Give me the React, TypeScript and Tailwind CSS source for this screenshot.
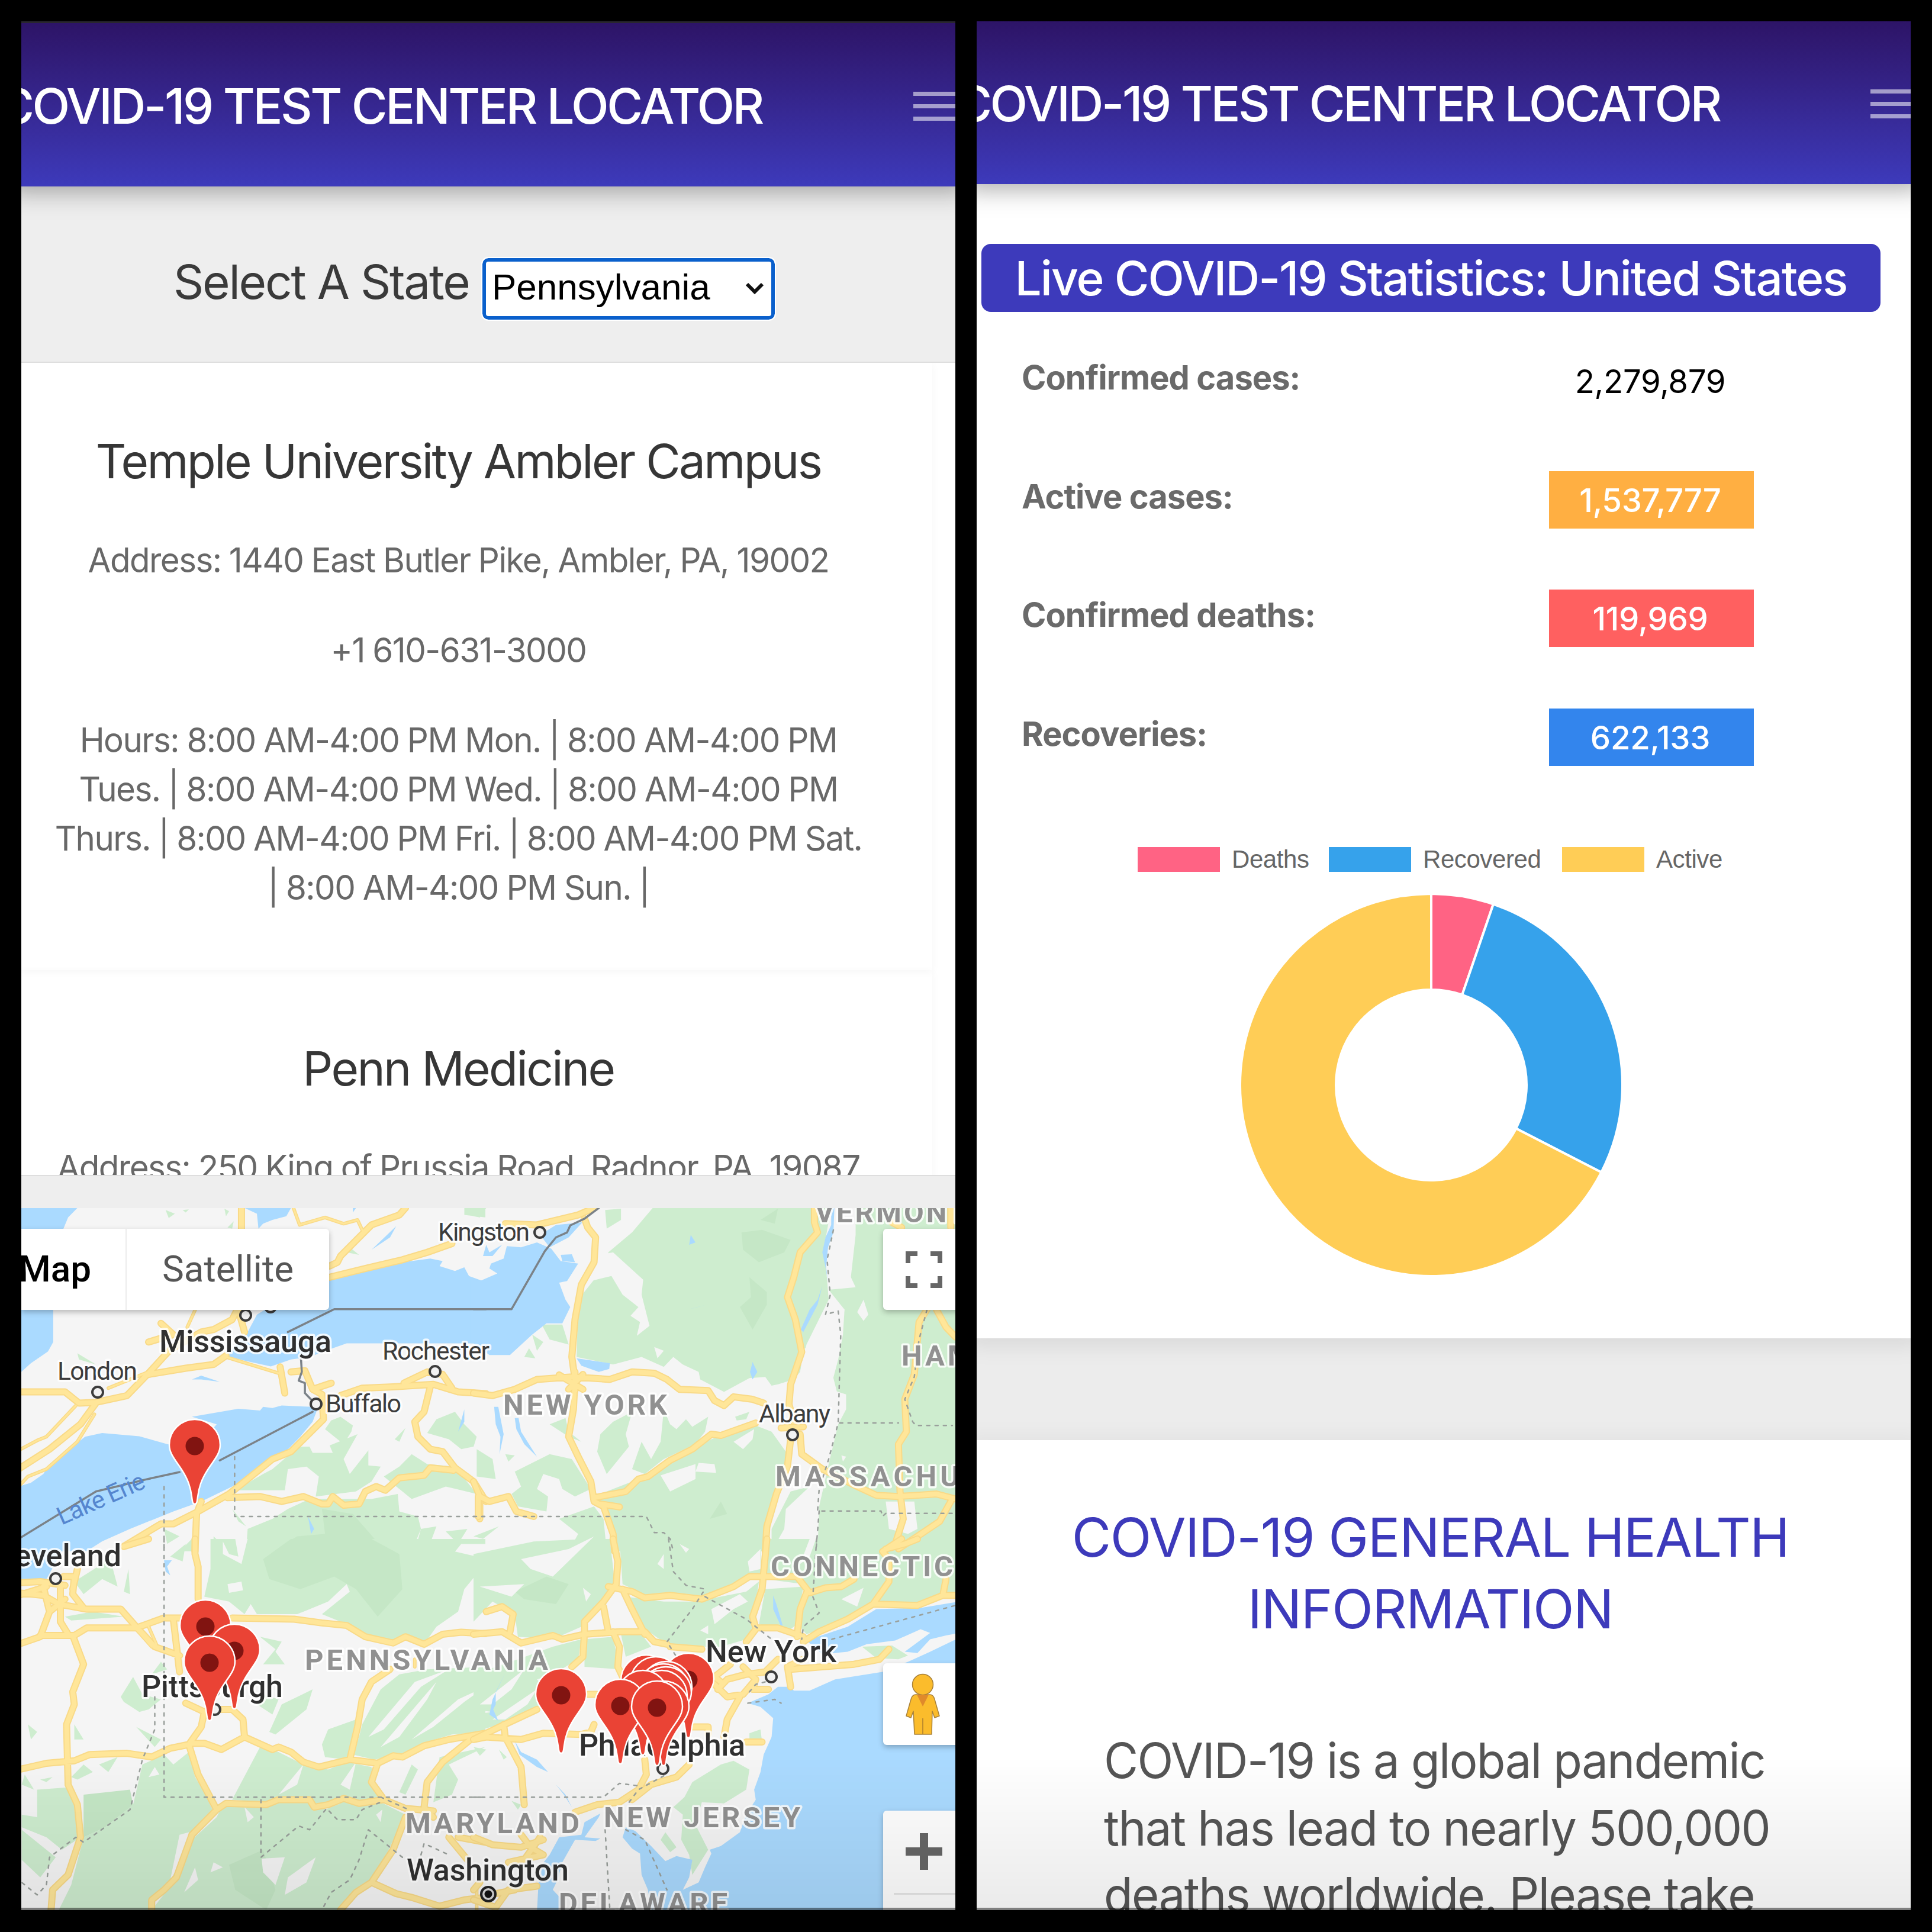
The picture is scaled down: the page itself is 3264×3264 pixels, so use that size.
import type { ReactNode } from "react";

const INTER = "font-['Inter','Liberation_Sans',sans-serif]";

/* ---------- Map artwork ---------- */

type Tile = {
  transform: string;
  green: string;
  clear: string;
  dark: string;
  water: string;
  border: string;
  dotted: string;
  road: string;
  thin: string;
};

const tiles: Tile[] = [
  {
    transform: "translate(0 1960) scale(.52296 .42092)",
    green:
      "M1380 1095L1410 1040L1470 1010L1500 1060L1540 1110L1530 1150L1490 1160L1450 1120ZM1050 1080L1070 1045L1100 1030L1140 1065L1135 1090L1110 1140ZM965 1150L1000 1150L1010 1175H1075L1065 1145L1155 1100L1110 1200L1130 1260L1190 1165L1190 1225L1230 1230L1200 1290L1150 1330L1020 1350L1030 1270L990 1230L930 1240L920 1325L760 1325L850 1260L880 1240ZM795 1570L800 1480L880 1440L930 1400L1000 1360H1200L1285 1340L1290 1410L1350 1430L1360 1480L1330 1570ZM1240 1270L1290 1230L1330 1180L1380 1220L1470 1230L1540 1340L1440 1310L1330 1360L1290 1320ZM750 1400L795 1470L770 1450ZM530 1480L580 1510L540 1540ZM690 1510L740 1570H690ZM620 1520L580 1570H630ZM535 200L565 215L545 232ZM590 200L610 198L600 210ZM725 195L740 205L730 225ZM735 270L755 245L750 275ZM1500 192H1568V230L1500 220ZM1125 345L1160 380L1120 370ZM250 775L310 820L255 800ZM1275 1120L1310 1075L1290 1130ZM1440 1490L1510 1480L1480 1540ZM1360 1480L1410 1470L1380 1570H1340Z",
    clear: "",
    dark: "M1040 1400L1140 1420L1210 1520L1230 1570H880L960 1510L1050 1500Z",
    water:
      "M60 192H250L220 230L205 275L172 600V730L155 768L100 815L60 860ZM790 192H940L925 225L880 240L850 255L835 275L830 215ZM1065 480L1180 445L1300 410L1390 395L1430 405L1420 425L1470 445L1500 430L1515 465L1560 485H1600V735H1120L1075 755L1000 790L940 800L875 828L790 805L730 785L800 690L830 620L870 590L1000 550ZM60 1310L100 1295L140 1260L160 1220L275 1110L330 1095L450 1108L540 1140L630 1160L700 1060L620 1030L770 998L840 1005L850 990L880 995L910 985L1010 990L1025 1000L1010 1050L970 1110L900 1200L800 1280L650 1370L560 1410L420 1480L330 1530L280 1570H60ZM620 880L650 865L710 890L650 880ZM1200 360L1280 265L1260 310ZM1480 1090L1500 1000L1500 1050ZM995 1430L1015 1480L1005 1500ZM1140 192H1150L1140 210Z",
    border: "M60 1520L310 1330L470 1282L580 1252M710 1205L1010 1010M1020 980L985 935L985 895L965 885L975 850L972 790M930 690L1080 598H1570",
    dotted: "M758 1190V1430H1568M530 1310V1568",
    road:
      "M780 192V275M1310 192L1290 220L1200 260L1100 385L1090 410L1065 425M1065 470L1180 435L1300 400L1380 370L1460 335M60 930H210L255 975L310 972L410 945L480 855L550 760L650 690L690 680L750 640L770 590M770 600L790 690M480 730L560 700L520 655M480 860L600 835L690 820L730 785M905 830L920 935M940 850L985 845L1010 920L1040 940L1045 1040L940 1170L880 1200L800 1280L740 1340L640 1410L560 1460L520 1460L480 1490L400 1550M1010 920L1070 895M1100 945L1170 915L1270 910L1400 900L1480 930L1570 937M1305 895L1380 850L1430 860L1460 915M1390 910L1370 1010L1340 1050L1350 1110L1390 1160L1430 1170L1470 1235L1530 1290L1570 1370M735 1355L840 1350L910 1370L980 1350L1040 1380H1060L1075 1350L1110 1385L1160 1380L1180 1330L1215 1310L1245 1325L1290 1275L1370 1265L1390 1235L1465 1245M650 1370L635 1420L630 1570M310 975L260 1060L160 1160L60 1240M1550 1370V1440",
    thin:
      "M948 192L968 260L1050 230L1110 255L1155 240L1170 280M730 790L900 855M245 985L150 1110L120 1125L60 1165M305 1020L250 1130L150 1240L90 1270L60 1310M350 915L410 885L480 850M630 602L605 670",
  },
  {
    transform: "translate(800 1960) scale(.53571 .42092)",
    green:
      "M425 370L500 290L565 192H1128L1105 350L1115 480L1120 560L1050 740L1030 850L1010 880L960 900L940 905L920 870L870 875L790 930L715 880L710 850L660 820L630 790L600 830L530 790L440 820L325 790L330 560L380 480L430 465ZM1205 192H1530V1570H1085L1090 1390L1120 1220L1150 1060L1175 1000V940L1125 920L1150 800L1165 700L1170 600L1120 520L1205 510L1190 470L1205 300ZM380 1350L500 1290L620 1200L750 1120L880 1060L940 1090L985 1170L1000 1230L960 1330L920 1570H450L430 1420ZM1000 1330L1060 1310L985 1400L980 1480L940 1570V1480ZM390 1170L400 1100L440 1050L500 1010L480 1100L490 1150L420 1260ZM600 1000L620 1060L640 1080L670 1040L690 1070L740 1030L730 1090L700 1140L600 1200L540 1260L500 1240L530 1130L560 1200L590 1130ZM240 1060L290 1035L300 1090L340 1130L300 1110ZM130 1250L240 1180L310 1200L350 1280L370 1320L320 1350L280 1320L270 1280L220 1260L200 1320L235 1350L230 1410L140 1390L120 1340L150 1310ZM10 1160L60 1200L70 1280L10 1270ZM100 1180L130 1185L110 1210ZM270 1440L380 1390L410 1440L420 1570H300L330 1500ZM0 1510L80 1470L30 1520ZM215 660H280L300 740L240 720ZM185 700L220 730L200 765ZM160 790L175 755L195 795ZM415 200L465 195V240L420 275ZM0 192H40L20 230L0 225ZM825 1030L870 1010L860 1040L830 1045Z",
    clear:
      "M400 380L440 370L535 480L530 540L555 665L515 705L525 650L495 625L520 590L470 540L435 465L370 485ZM570 750L600 765L580 795ZM590 1265L700 1220V1280L620 1330ZM710 1215L760 1220L765 1255L700 1250ZM820 1130L885 1080L880 1120L850 1160ZM1140 560L1170 600L1160 640L1110 670L1120 590ZM1210 610L1230 560L1245 620L1230 645ZM1040 760L1120 690L1110 790L1130 850L1150 950V1000L1120 1060L1060 1110L1010 1040ZM1160 1185L1175 1190L1165 1210ZM1300 1370H1390L1400 1480L1370 1500L1310 1480ZM1030 1530L1070 1420L1080 1570ZM1190 1540L1215 1520L1200 1545Z",
    dark: "M845 290L910 280L1000 320L980 370L900 410L850 360ZM870 470L925 530V580L880 680L840 590L875 550ZM905 240L960 195L950 255ZM780 1370L800 1420L745 1440Z",
    water:
      "M-10 735V480L20 485L75 455L50 435L55 415L95 395L105 345L150 350L200 330L245 355L275 405L330 415L295 485L270 492L290 560L305 590L280 655H230L185 700L115 782H50L0 735ZM210 300L260 260L340 250L400 192L350 240L300 310L240 350ZM275 380L310 378L320 410L280 405ZM30 385L40 340L50 370L90 340L60 385ZM325 795L430 815L428 838L395 850L340 825ZM685 300L700 330L680 340ZM880 810L895 850L880 880L872 850ZM675 600L735 580L700 592ZM1128 192H1138L1135 290L1118 350L1112 430L1118 490L1110 430L1100 370L1110 310L1128 260ZM1100 505L1085 580L1040 690L1032 680L1060 600L1085 560ZM65 990H78L95 1100L82 1180L85 1110L70 1060ZM130 1035H142L150 1090L200 1190L160 1140L135 1080Z",
    border: "M0 598H120L225 365L260 310L295 290L305 262L350 235L395 192",
    dotted:
      "M0 1430H545L570 1495H600L620 1520L630 1570M1135 280L1115 400L1125 540L1110 620L1150 605L1158 700L1150 1055L1120 1200L1090 1320L1085 1408H1285L1290 1430L1300 1418H1520M1090 1408L1080 1568M1155 1055H1340M1430 600L1405 720L1390 870L1360 960L1385 1050L1395 1065H1510",
    road:
      "M0 935L60 945L130 920L200 880L310 870L430 880L500 850L570 855L610 880L650 920L740 925L760 965L790 985L820 950L880 960L915 975M350 235L360 270L385 310L380 410L340 500L320 640L310 790L320 880L315 1000L300 1110L330 1190L370 1290L380 1370L410 1390L440 1500L445 1570M270 862L345 920M345 860L300 920M320 850V925M100 255L200 260L330 220L380 192M380 1355L480 1330L520 1280L550 1270L620 1205L690 1160L750 1100L780 1105L890 1055M1075 192V250L1085 290L1030 370L1010 470L990 550L1015 640L1035 770L1000 900L995 980L1010 1050M1000 1120L990 1230L955 1340L925 1470L920 1570M1030 1100L1035 1180L1100 1240L1210 1310L1270 1345L1340 1350L1400 1345L1460 1340L1520 1360M1430 600L1405 650L1390 860L1360 960L1365 1090L1340 1140L1345 1330L1355 1440L1330 1540M1460 600L1490 670L1520 710M1505 1370L1470 1450L1400 1510L1340 1560M0 1290L20 1350L50 1370L110 1350L135 1410L190 1430M15 1350V1430M400 1380L460 1392M970 1075L1040 1070M1320 250L1350 270M1505 192V270",
    thin: "",
  },
  {
    transform: "translate(0 2600) scale(.52296 .42347)",
    green:
      "M680 0H1568V20L1490 20L1470 50L1540 70L1568 110L1540 140L1500 200L1480 290L1410 350L1370 420L1310 390L1250 410L1140 370L1120 340L1040 300L1130 210L1120 180L1060 250L960 300L830 300L810 260L790 300L740 250L660 230L680 120ZM1170 740L1230 600L1290 540L1380 520L1568 510V770L1460 780L1380 810L1290 860L1210 880L1140 860L1160 790ZM1060 760L1150 720L1120 880L1050 870L1040 820ZM870 770L910 660L1010 600L990 680L890 780ZM840 830L900 850L980 900L1060 920L1120 890L1200 910L1220 1000L1230 1040L1050 1060L850 1050L750 1040ZM530 860L560 900L610 850L630 950L660 1010L690 1090L620 1180L590 1300L530 1400L480 1480H190L230 1380L270 1190L340 1150L430 1060L460 900ZM120 1000L230 990L260 1190L200 1240L150 1190L70 1150V1100L120 1110ZM70 1160L180 1270L130 1350L70 1280ZM720 1060L850 1060L870 1040L1000 1050L1050 1080L1110 1050L1230 1050L1310 1100L1240 1280L1200 1370L1100 1480H490L560 1370L620 1200L700 1110ZM240 170L330 100L350 50L380 190L330 160L270 220ZM400 210L415 120L420 220ZM390 630L430 550L460 620L520 640L480 680L450 690L400 650ZM520 490L540 520L490 540ZM550 70L600 20L590 90ZM840 390L910 410L890 450L920 500L850 500L890 440ZM850 620L900 640L880 700L830 660ZM210 310L300 290L400 310L230 325ZM440 750L520 800L500 830ZM240 740L270 800L240 800ZM230 950L270 900L300 930L250 960ZM320 900L380 870L350 930ZM80 940L110 1000L70 980ZM1420 870L1568 830L1450 900L1480 960L1460 1020L1400 1050ZM90 740L120 770L100 800ZM1330 900L1350 920L1310 1020L1290 1010ZM130 960L170 950L150 970Z",
    clear:
      "M720 10L740 60L770 70L760 0H800L780 100L720 60ZM735 180L780 170L785 205L740 215ZM845 1275L920 1270L890 1380L850 1330ZM930 1350L1020 1270L990 1370L920 1420ZM790 1070L820 1110L800 1130ZM580 1180L610 1170L600 1260L550 1360ZM690 1290L720 1310L680 1330ZM940 960L980 900L960 980L900 1020ZM480 950L500 910L515 940ZM630 1310L640 1360L595 1410ZM1215 1100L1235 1080L1230 1130ZM1190 790L1340 570L1450 520L1360 590L1240 760ZM1230 830L1410 570L1380 640L1290 790ZM1330 800L1480 640L1568 590L1500 650L1400 750ZM1100 980L1150 890L1130 1000Z",
    dark: "M850 80L940 0H1200L1290 60L1300 200L1220 310L1150 200L1080 150L970 200L870 160ZM270 1020L420 1000L430 1060L340 1150L270 1190ZM740 1300L850 1240L890 1400L860 1480L760 1400Z",
    water: "M60 0H315L270 30L200 50L150 160H60ZM530 85L555 85L540 110L550 145L535 130Z",
    border: "",
    dotted:
      "M530 0V1030H1568M500 630L500 760L460 880L420 1080L270 1210L245 1190L160 1270L150 1380L120 1420L70 1370M843 1040V1270L965 1145L1000 1160L1055 1075L1090 1120H1150L1170 1080L1230 1050M1230 1030L1320 1080M1300 1270L1190 1160L1160 1280L1130 1360L1070 1410L1040 1480M1360 1260L1370 1215L1450 1260",
    road:
      "M480 0L400 30M630 0V60L640 110V240M60 175L130 170L210 185M60 215L140 225L190 260L280 280H390L440 350L500 430L580 465M140 190L160 290L130 390L60 420M195 190L195 330L220 380M205 150L240 150L235 220L270 275M250 120L235 200M60 225L150 190M160 290L210 240M130 385H240L280 355H440L530 315H600M560 320L580 530M235 385L270 500L235 610L240 660L215 740L220 980L250 1060L260 1190L220 1340L170 1400L165 1480M60 920L150 895L240 885L290 860L410 855L490 870L550 835L610 820L650 750L660 690L600 655M610 820L640 940L700 1080L620 1180L570 1350L530 1400L490 1440V1480M620 815H660L715 840L790 790L785 720L750 680H690M790 790L880 840L900 830L940 850L980 890L1030 910L1130 880L1220 895L1200 970L1235 1030M1130 880L1155 750L1170 640L1200 570L1260 520M1220 895L1270 865L1300 870L1370 825L1450 800L1568 775M1520 800L1430 890L1380 970L1370 1070L1400 1110M700 1080L730 1055L860 1060L900 1040H1000L1015 1070L1060 1060L1110 1035L1160 1055L1240 1040L1310 1075L1400 1085M1310 1110L1270 1240L1200 1370L1150 1410L1100 1480M1200 1370L1280 1415L1330 1430L1420 1465L1500 1440L1568 1430M1450 1190L1510 1280M1480 1190L1568 1210M750 315L950 320L1040 335L1120 345L1180 390L1270 415L1310 390L1370 420L1430 380L1490 372L1568 378",
    thin: "M440 360L490 430M480 350L505 420M1340 480V510M1540 1390V1480",
  },
  {
    transform: "translate(800 2600) scale(.53571 .42347)",
    green:
      "M0 60L190 10L360 0H430L445 170L400 250L340 350L250 400L140 390L130 300L60 250L0 330ZM460 0H905L910 140L870 140L800 190L730 230L560 235L470 180ZM480 230L600 250L700 250L860 210L900 170L880 350L860 400L780 430L620 430L520 340ZM350 400L440 390L460 520L350 510ZM935 0H1520V230L1370 260H1260L1180 320L1050 380L1030 350L1050 220L1040 180L920 160ZM920 200L1040 190L1020 340L990 370L900 340ZM0 540L140 480L250 430L340 400L330 480L250 540L200 560L230 600L200 680L110 730L0 770V700L60 690L0 680ZM690 970L780 900L820 885L870 920L860 1000L790 1055L720 1050L700 1140L740 1240L690 1340L680 1260L655 1200L660 1100L630 1070L665 1030ZM590 1200L605 1170L640 1230L620 1250ZM870 775L905 760L910 810L870 815ZM1225 430L1320 425L1370 465L1340 480L1270 475ZM120 1045L140 1080L150 1060ZM0 830L40 840L20 865ZM80 840L105 870L95 880ZM465 380L530 380L560 430L480 470Z",
    clear:
      "M150 80L300 40L380 -10L250 150L180 120ZM20 190L160 180L120 230ZM345 195L370 220L355 250ZM580 100L600 60V120ZM650 20L680 40L670 55ZM840 220L865 250L820 280L760 340L750 280ZM865 90L905 40V120L870 130ZM715 365L740 345V380ZM20 660L160 520L120 600L60 660ZM60 720L200 600L170 660L100 720ZM1030 100L1060 0H1080L1060 70ZM1160 240L1230 195L1210 270Z",
    dark: "M130 210L230 150L300 180L260 260L160 240Z",
    water:
      "M1530 250L1410 275L1270 280L1180 350L1050 405L1100 460L1180 450L1240 420L1330 405L1410 360L1440 375L1360 450L1400 455L1440 400L1490 385L1530 375ZM1530 395L1440 450L1370 490L1290 530L1140 560L1060 605L1010 605L1000 590L960 590L930 620L865 655L905 670L945 715L940 790L915 860L905 930L885 1000L890 1040L860 1100L840 1170L780 1225L745 1240L750 1255L730 1310L710 1370L660 1400L680 1350L690 1280L640 1265L605 1285L560 1225L510 1165L480 1150L470 1190L500 1235L525 1255L530 1340L550 1400L560 1490H1530ZM400 1095L350 1130L340 1180L270 1190L240 1260L215 1300L205 1370L200 1490H265L280 1440L250 1400L265 1360L280 1290L320 1200L385 1205L400 1195L350 1190L395 1110ZM945 225L955 260L975 345L970 350L945 280ZM100 535L70 610V660L62 680L78 725L50 700L60 640ZM130 805L150 850L200 880L235 930L200 910L145 860ZM260 980L290 1020L310 1070L285 1020Z",
    border: "",
    dotted:
      "M615 0L630 130L670 185L730 200L690 280L610 410L640 470M730 230L860 320L940 400M1082 0L1070 230L1090 295L1040 350L1035 400M1130 400L1520 265M0 1030H410L460 975L520 985M415 1160L430 1480M480 1160L540 1200L610 1400M600 945L520 1000L485 1060M865 655L950 640L970 655M870 610L890 580L950 560",
    road:
      "M0 380L90 370L150 415L250 385L280 400L350 380L460 370H540L570 410L610 420M40 290L90 270L125 300L115 370M440 0L455 90L450 180L410 250L350 330V370L345 470L310 510M425 190L500 210L540 235L620 225L720 240L820 190L870 150L1020 150L1060 215L1110 195L1160 190L1200 160M470 200L500 280L540 380M410 270L425 370M440 370L460 430L455 510L470 550M925 0L910 200L880 310L890 355L960 355L1040 390M1050 215L1030 280L1020 390M890 360L860 410M1520 225H1480L1450 240L1400 265L1260 260L1180 320L1090 370L1040 410M1350 0L1290 50L1310 80V170L1260 260M1400 0L1360 20L1300 40M1490 160L1480 225M1310 440L1280 480L1200 500L1000 520M770 600L800 560L860 540L920 530L960 480M1000 590L990 510L1040 480M850 510L890 560L880 600H930M620 430L720 440M780 570L760 550L810 500M760 580L800 630L850 620L890 560M840 630L800 720L790 790M690 750H740V780M200 680L90 745L0 800M0 800L40 790L150 800L220 775L340 780L370 770L380 740M95 740L100 790L150 910L160 1060M860 810H910M360 620H390M540 880L545 940L520 1000L460 1050L390 1060L320 1090M680 900L640 950L560 980L500 1040M0 1190L60 1220L150 1230L220 1200M150 1180L180 1230L220 1260L110 1290M210 1190L160 1280M0 1440L70 1470L110 1400L200 1385M50 1420L130 1400M20 1370L0 1400",
    thin: "",
  },
];

type Label = { t: string; x: number; y: number; w?: number; kind: "town" | "city" | "state"; end?: boolean };

const labels: Label[] = [
  { t: "Kingston", x: 740, y: 2096, w: 155, kind: "town" },
  { t: "London", x: 97, y: 2331, w: 135, kind: "town" },
  { t: "Rochester", x: 646, y: 2297, w: 181, kind: "town" },
  { t: "Buffalo", x: 550, y: 2386, w: 128, kind: "town" },
  { t: "Albany", x: 1282, y: 2403, w: 121, kind: "town" },
  { t: "Mississauga", x: 269, y: 2284, w: 291, kind: "city" },
  { t: "Cleveland", x: 205, y: 2646, kind: "city", end: true },
  { t: "Pittsburgh", x: 239, y: 2867, w: 239, kind: "city" },
  { t: "Philadelphia", x: 978, y: 2966, w: 281, kind: "city" },
  { t: "New York", x: 1192, y: 2808, w: 221, kind: "city" },
  { t: "Washington", x: 687, y: 3177, w: 274, kind: "city" },
  { t: "VERMONT", x: 1377, y: 2065, w: 256, kind: "state" },
  { t: "HAMPSHIRE", x: 1523, y: 2307, w: 320, kind: "state" },
  { t: "NEW YORK", x: 850, y: 2390, w: 277, kind: "state" },
  { t: "MASSACHUSETTS", x: 1310, y: 2511, w: 490, kind: "state" },
  { t: "CONNECTICUT", x: 1302, y: 2663, w: 380, kind: "state" },
  { t: "PENNSYLVANIA", x: 515, y: 2821, w: 411, kind: "state" },
  { t: "MARYLAND", x: 685, y: 3097, w: 294, kind: "state" },
  { t: "NEW JERSEY", x: 1020, y: 3087, w: 332, kind: "state" },
  { t: "DELAWARE", x: 944, y: 3232, w: 285, kind: "state" },
];

const labelClass = {
  town: "fill-[#3c3c3c] stroke-white text-[43px] font-normal",
  city: "fill-[#303030] stroke-white text-[52px] font-medium",
  state: "fill-[#919191] stroke-white text-[49px] font-bold",
};

const townDots = [
  [415, 2222], [457, 2208], [165, 2352], [735, 2317], [534, 2372], [912, 2082],
  [1339, 2424], [1303, 2833], [94, 2667], [363, 2888], [1120, 2988],
];

const pins = [
  [329, 2541], [347, 2846], [396, 2887], [354, 2907], [1163, 2936],
  [1092, 2939], [1108, 2942], [1126, 2950], [1121, 2954], [1125, 2959], [1118, 2965], [1086, 2965],
  [948, 2962], [1048, 2980], [1121, 2983], [1110, 2983],
];

const PIN =
  "M0 0C-4 0 -4 -5 -5 -12C-7 -28 -11 -41 -22 -58C-33 -75 -43 -85 -43 -100A43 43 0 1 1 43 -100C43 -85 33 -75 22 -58C11 -41 7 -28 5 -12C4 -5 4 0 0 0Z";

function MapArt() {
  const px = { vectorEffect: "non-scaling-stroke" } as const;
  return (
    <svg viewBox="36 2041 1578 1187" className="block h-[1187px] w-[1578px] font-['Roboto',sans-serif]" strokeLinejoin="round">
      <rect x="36" y="2041" width="1578" height="1187" fill="#f5f5f5" />
      {tiles.map((t) => (
        <g key={t.transform} transform={t.transform}>
          <path d={t.green} fill="#ceedcf" />
          <path d={t.dark} fill="#c5e7c6" />
          <path d={t.clear} fill="#f5f5f5" />
          <path d={t.water} fill="#aadaff" />
        </g>
      ))}
      {tiles.map((t) => (
        <g key={t.transform} transform={t.transform} fill="none" strokeLinecap="round">
          <path d={t.road} stroke="#f9da88" strokeWidth="12" {...px} />
          <path d={t.thin} stroke="#f9da88" strokeWidth="6" {...px} />
          <path d={t.road} stroke="#ffe699" strokeWidth="8" {...px} />
          <path d={t.thin} stroke="#ffe699" strokeWidth="3" {...px} />
          <path d={t.border} stroke="#7b8288" strokeWidth="3.5" {...px} />
          <path d={t.dotted} stroke="#9aa09c" strokeWidth="2.5" strokeDasharray="5 9" {...px} />
        </g>
      ))}
      <text transform="translate(104 2577) rotate(-24)" className="fill-[#5586cf] text-[42px]" textLength="158">
        Lake Erie
      </text>
      {townDots.map(([x, y]) => (
        <circle key={x} cx={x} cy={y} r="9" fill="#f2f2f2" stroke="#3c3c3c" strokeWidth="4" />
      ))}
      <circle cx="825" cy="3200" r="12" fill="#d8d8d8" stroke="#222" strokeWidth="4" />
      <circle cx="825" cy="3200" r="6.5" fill="#111" />
      {labels.map((l) => (
        <text
          key={l.t + l.y}
          x={l.x}
          y={l.y}
          textLength={l.w}
          textAnchor={l.end ? "end" : "start"}
          paintOrder="stroke"
          strokeWidth="7"
          strokeOpacity="0.85"
          className={labelClass[l.kind]}
        >
          {l.t}
        </text>
      ))}
      {pins.map(([x, y]) => (
        <g key={`${x}-${y}`} transform={`translate(${x} ${y})`}>
          <path d={PIN} fill="#ea4335" stroke="#fff" strokeWidth="2.5" />
          <circle cy="-98" r="15.5" fill="#811411" />
        </g>
      ))}
    </svg>
  );
}

function MapView() {
  return (
    <div className="relative h-[1187px] w-full overflow-hidden">
      <MapArt />
      <div className="absolute left-0 top-[35px] flex h-[137px] rounded-r-md bg-white font-['Roboto',sans-serif] text-[62px] leading-[136px] shadow-[0_4px_10px_rgba(0,0,0,0.25)]">
        <div className="flex w-[178px] justify-end border-r-2 border-[#ececec] pr-[58px] font-medium text-black">Map</div>
        <div className="w-[342px] pl-[60px] text-[#565656]">Satellite</div>
      </div>
      <div className="absolute left-[1456px] top-[35px] h-[137px] w-[130px] rounded-md bg-white pl-[38px] pt-[38px] shadow-[0_4px_10px_rgba(0,0,0,0.25)]">
        <svg viewBox="0 0 62 62" className="size-[62px]" fill="none" stroke="#666" strokeWidth="8">
          <path d="M20 4H4V20M42 4H58V20M4 42V58H20M58 42V58H42" />
        </svg>
      </div>
      <div className="absolute left-[1456px] top-[769px] h-[138px] w-[130px] rounded-md bg-white pl-[38px] pt-[17px] shadow-[0_4px_10px_rgba(0,0,0,0.25)]">
        <svg viewBox="0 0 58 106" className="h-[106px] w-[58px]" fill="#fbbc2c" stroke="#a8813a" strokeWidth="1.5" strokeLinejoin="round">
          <path d="M17 36H41C46 36 48 40 49 44L57 72L49 75L45 64L44 103H15L13 64L9 75L1 72L9 44C10 40 12 36 17 36Z" />
          <circle cx="29" cy="19" r="17.5" />
          <path d="M19 36L29 56L39 36Z" fill="#e08a2b" stroke="none" />
          <path d="M29 76V102" stroke="#c08d2c" strokeWidth="2" />
        </svg>
      </div>
      <div className="absolute left-[1456px] top-[1018px] h-[180px] w-[130px] rounded-md bg-white pl-[38px] pt-[38px] shadow-[0_4px_10px_rgba(0,0,0,0.25)]">
        <svg viewBox="0 0 62 62" className="size-[62px]" stroke="#666" strokeWidth="14">
          <path d="M31 0V62M0 31H62" />
        </svg>
        <div className="-ml-5 mt-[39px] h-[3px] w-[130px] bg-[#e6e6e6]" />
      </div>
    </div>
  );
}

/* ---------- Shared chrome ---------- */

function Header({ className, menu }: { className: string; menu: string }) {
  return (
    <header
      className={`relative z-10 flex shrink-0 items-center justify-end bg-linear-to-b from-[#2d1467] to-[#3d3abb] shadow-[0_-14px_40px_22px_rgba(0,0,0,0.34)] ${className}`}
    >
      <h1 className="whitespace-nowrap text-[83px] font-medium leading-none tracking-[-0.041em] text-white">
        COVID-19 TEST CENTER LOCATOR
      </h1>
      <div className={`flex shrink-0 flex-col gap-[14px] ${menu}`}>
        <span className="h-[7px] bg-white/55" />
        <span className="h-[7px] bg-white/55" />
        <span className="h-[7px] bg-white/55" />
      </div>
    </header>
  );
}

function Screen({ children, bg }: { children: ReactNode; bg: string }) {
  return (
    <section className={`relative flex h-[3191px] w-[1578px] flex-col overflow-hidden ${bg}`}>
      {children}
      <div className="pointer-events-none absolute inset-x-0 bottom-0 z-20 h-[260px] border-b-4 border-black/50 bg-linear-to-b from-transparent to-black/8" />
    </section>
  );
}

/* ---------- Left screen ---------- */

function Center({ name, lines }: { name: string; lines: string[][] }) {
  return (
    <article className="w-[1539px] px-[20px] pb-[98px] pt-[118px] text-center shadow-[0_3px_14px_rgba(0,0,0,0.04)]">
      <div className="-ml-[69px] w-[1575px]">
        <h2 className="text-[80px] leading-[96px] tracking-[-0.033em] text-[#363636]">{name}</h2>
        <div className="mt-[78px] flex scale-x-[0.975] flex-col gap-[69px] text-[58px] leading-[83px] tracking-[-0.028em] [word-spacing:-0.015em] text-[#686868]">
          {lines.map((block) => (
            <div key={block[0]}>
              {block.map((row) => (
                <p key={row} className="whitespace-nowrap">{row}</p>
              ))}
            </div>
          ))}
        </div>
      </div>
    </article>
  );
}

function LocatorScreen() {
  return (
    <Screen bg="bg-[#eeeeee]">
      <Header className="h-[279px] border-t-3 border-[#29272f] pt-[4px]" menu="ml-[255px] w-[71px]" />
      <div className="flex h-[296px] shrink-0 items-start pl-[257px] pt-[113px]">
        <label className="w-[522px] whitespace-nowrap text-[80px] leading-[96px] tracking-[-0.028em] text-[#3a3a3a]">
          Select A State
        </label>
        <div className="mt-[8px] flex h-[104px] w-[494px] items-center justify-between rounded-[10px] border-[6px] border-[#0a60cc] bg-white pl-[10px] pr-[11px] font-['Liberation_Sans',Arial,sans-serif] text-[62px] leading-[80px] text-black outline-2 outline-white">
          <span className="-mt-[6px]">Pennsylvania</span>
          <svg viewBox="0 0 34 24" className="h-6 w-[34px]" fill="none" stroke="#111" strokeWidth="6">
            <path d="M4 4L17 17L30 4" />
          </svg>
        </div>
      </div>
      <div className="h-[1376px] shrink-0 overflow-hidden border-y-2 border-[#dedede] bg-white">
        <Center
          name="Temple University Ambler Campus"
          lines={[
            ["Address: 1440 East Butler Pike, Ambler, PA, 19002"],
            ["+1 610-631-3000"],
            [
              "Hours: 8:00 AM-4:00 PM Mon. | 8:00 AM-4:00 PM",
              "Tues. | 8:00 AM-4:00 PM Wed. | 8:00 AM-4:00 PM",
              "Thurs. | 8:00 AM-4:00 PM Fri. | 8:00 AM-4:00 PM Sat.",
              "| 8:00 AM-4:00 PM Sun. |",
            ],
          ]}
        />
        <Center name="Penn Medicine" lines={[["Address: 250 King of Prussia Road, Radnor, PA, 19087"]]} />
      </div>
      <div className="h-[54px] shrink-0" />
      <MapView />
    </Screen>
  );
}

/* ---------- Right screen ---------- */

const stats = [
  { label: "Confirmed cases:", value: "2,279,879", tone: "text-black" },
  { label: "Active cases:", value: "1,537,777", tone: "bg-[#ffaf42] font-medium text-white" },
  { label: "Confirmed deaths:", value: "119,969", tone: "bg-[#ff6060] font-medium text-white" },
  { label: "Recoveries:", value: "622,133", tone: "bg-[#3385ed] font-medium text-white" },
];

const slices = [
  { name: "Deaths", value: 119969, fill: "#ff6384", box: "bg-[#ff6384]", cell: "w-[323px]" },
  { name: "Recovered", value: 622133, fill: "#36a2eb", box: "bg-[#36a2eb]", cell: "w-[394px]" },
  { name: "Active", value: 1537777, fill: "#ffcd56", box: "bg-[#ffcd56]", cell: "w-[280px]" },
];

function Doughnut() {
  const total = slices.reduce((sum, s) => sum + s.value, 0);
  const point = (r: number, a: number) => `${325 + r * Math.sin(a)} ${325 - r * Math.cos(a)}`;
  let start = 0;
  return (
    <svg viewBox="0 0 650 650" className="size-[650px]" stroke="#fff" strokeWidth="4">
      {slices.map((s) => {
        const end = start + (s.value / total) * Math.PI * 2;
        const large = end - start > Math.PI ? 1 : 0;
        const d = `M${point(323, start)}A323 323 0 ${large} 1 ${point(323, end)}L${point(161, end)}A161 161 0 ${large} 0 ${point(161, start)}Z`;
        start = end;
        return <path key={s.name} d={d} fill={s.fill} />;
      })}
    </svg>
  );
}

function StatsScreen() {
  return (
    <Screen bg="bg-[#ececec]">
      <Header className="h-[275px] pt-[3px]" menu="ml-[254px] w-[68px]" />
      <div className="h-[1950px] shrink-0 bg-white pt-[101px] shadow-[0_-10px_40px_18px_rgba(0,0,0,0.1)]">
        <h2 className="ml-[8px] flex h-[115px] w-[1519px] items-center justify-center whitespace-nowrap rounded-[16px] bg-[#3d3abb] text-[80px] font-medium leading-none tracking-[-0.025em] text-white">
          Live COVID-19 Statistics: United States
        </h2>
        <div className="mt-[65px] flex flex-col gap-[103px] pl-[76px]">
          {stats.map((s) => (
            <div key={s.label} className="flex h-[97.5px]">
              <div className="w-[891px] pt-[10px] text-[56px] font-bold leading-[72px] tracking-[-0.017em] text-[#6a6a6a]">
                {s.label}
              </div>
              <div className={`mt-[3px] h-[97px] w-[346px] pr-[4px] text-center text-[54.5px] leading-[99px] tracking-[-0.005em] ${s.tone}`}>
                {s.value}
              </div>
            </div>
          ))}
        </div>
        <div className="mt-[140px] flex pl-[272px] font-['Liberation_Sans',Arial,sans-serif] text-[42px] leading-[42px] text-[#666]">
          {slices.map((s) => (
            <div key={s.name} className={`flex gap-[20px] ${s.cell}`}>
              <span className={`h-[42px] w-[139px] ${s.box}`} />
              <span className="tracking-[-0.01em]">{s.name}</span>
            </div>
          ))}
        </div>
        <div className="mt-[35px] pl-[443px]">
          <Doughnut />
        </div>
      </div>
      <div className="h-[172px] shrink-0" />
      <div className="h-[900px] shrink-0 bg-white pt-[104px] shadow-[0_4px_30px_14px_rgba(0,0,0,0.04)]">
        <h2 className="mr-[45px] text-center text-[91px] leading-[121px] tracking-[-0.016em] text-[#3d3abb]">
          <span className="block">COVID-19 GENERAL HEALTH</span>
          <span className="block">INFORMATION</span>
        </h2>
        <div className="ml-[215px] mt-[139px] origin-left scale-x-[0.97] whitespace-nowrap text-[82px] leading-[113.5px] tracking-[-0.02em] text-[#555]">
          <p>COVID-19 is a global pandemic</p>
          <p>that has lead to nearly 500,000</p>
          <p>deaths worldwide. Please take</p>
        </div>
      </div>
    </Screen>
  );
}

export default function App() {
  return (
    <main className={`flex h-[3264px] w-[3264px] gap-[36px] bg-black pl-[36px] pt-[36px] ${INTER}`}>
      <LocatorScreen />
      <StatsScreen />
    </main>
  );
}
